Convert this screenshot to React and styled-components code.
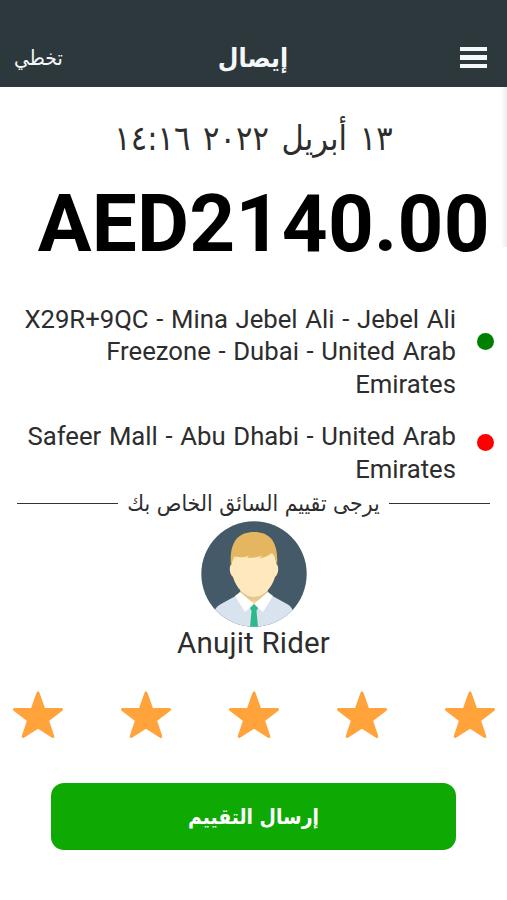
import React from "react";
import styled, { createGlobalStyle } from "styled-components";

const stops = [
	{
		color: "#008000",
		lines: ["X29R+9QC - Mina Jebel Ali - Jebel Ali", "Freezone - Dubai - United Arab", "Emirates"],
	},
	{
		color: "#ff0000",
		lines: ["Safeer Mall - Abu Dhabi - United Arab", "Emirates"],
	},
];

const Star = () => (
	<svg width="52" height="50" viewBox="0 0 52 50">
		<path
			d="M26 3 L31.8 19.4 L49.5 19.6 L35.4 30.2 L40.8 46.5 L26 37 L11.2 46.5 L16.6 30.2 L2.5 19.6 L20.2 19.4 Z"
			fill="#ffa33a"
			stroke="#ffa33a"
			strokeWidth="3"
			strokeLinejoin="round"
		/>
	</svg>
);

const Avatar = () => (
	<svg width="106" height="106" viewBox="0 0 106 106">
		<defs>
			<clipPath id="face">
				<circle cx="53" cy="53" r="52.7" />
			</clipPath>
		</defs>
		<g clipPath="url(#face)">
			<rect width="106" height="106" fill="#455a68" />
			<path d="M13 92 Q14 86 20 83 L40 72 H66 L86 83 Q92 86 93 94 V106 H13 Z" fill="#d9e2ef" />
			<path d="M39.5 62 H66.5 V73 L53 86 L39.5 73 Z" fill="#f3d79f" />
			<path d="M39.5 67 Q53 82 66.5 67 V72 Q53 88 39.5 72 Z" fill="#e4c88f" />
			<path d="M39 71 L53 83 L44 91 L34 75 Z" fill="#fff" />
			<path d="M67 71 L53 83 L62 91 L72 75 Z" fill="#fff" />
			<path d="M33 28 H73 L75.5 43 C78 45 78 53 74 56 C71 67 62 76 53 76 C44 76 35 67 32 56 C28 53 28 45 30.5 43 Z" fill="#ffe8bd" />
			<path d="M30 45 C28 21 37 11 53 11 C69 11 78 21 76 45 C75.5 40 74 35 71 32 Q66 36 58.5 37.5 L61 34.5 Q55 37 46 37 L48.5 34.5 C43 37 38 36.5 33.5 35.5 Q31 40 30 45 Z" fill="#e5b660" />
			<path d="M49 87 L53 83 L57 87 L55.5 90 L57 106 H49 L50.5 90 Z" fill="#2db98a" />
		</g>
	</svg>
);

const App = () => {
	return (
		<Wrapper>
			<GlobalStyle />
			<Header>
				<MenuButton>
					<span />
					<span />
					<span />
				</MenuButton>
				<Title>إيصال</Title>
				<Skip>تخطي</Skip>
			</Header>
			<EdgeShadow />
			<DateText>١٣ أبريل ٢٠٢٢ ١٤:١٦</DateText>
			<Amount>AED2140.00</Amount>
			<StopList>
				{stops.map((stop) => (
					<Stop key={stop.color}>
						<Dot $color={stop.color} />
						<Address>
							{stop.lines.map((line) => (
								<p key={line}>{line}</p>
							))}
						</Address>
					</Stop>
				))}
			</StopList>
			<Divider>يرجى تقييم السائق الخاص بك</Divider>
			<Driver>
				<Avatar />
				<h2>Anujit Rider</h2>
			</Driver>
			<Stars>
				{[1, 2, 3, 4, 5].map((n) => (
					<Star key={n} />
				))}
			</Stars>
			<SubmitButton>إرسال التقييم</SubmitButton>
		</Wrapper>
	);
};

const GlobalStyle = createGlobalStyle`
	* {
		box-sizing: border-box;
		margin: 0;
		padding: 0;
	}
	body {
		background: #fff;
		font-family: Roboto, "DejaVu Sans", sans-serif;
	}
`;

const Wrapper = styled.div`
	position: relative;
	display: flex;
	flex-direction: column;
	width: 507px;
	height: 900px;
	overflow: hidden;
	direction: rtl;
	background: #fff;
	color: #2d2d2d;
`;

const Header = styled.header`
	display: grid;
	grid-template-columns: 100px 1fr 100px;
	align-items: center;
	height: 87px;
	padding: 28px 20px 0 14px;
	background: #2d383d;
	color: #f4f8fa;
`;

const MenuButton = styled.button`
	display: flex;
	flex-direction: column;
	gap: 4px;
	width: 27px;
	border: 0;
	background: none;

	span {
		height: 4.5px;
		background: #f4f8fa;
	}
`;

const Title = styled.h1`
	padding-left: 5px;
	text-align: center;
	font: bold 26.5px/27px "DejaVu Sans Condensed", "DejaVu Sans", sans-serif;
`;

const Skip = styled.a`
	text-align: left;
	font: 21px/26px "DejaVu Sans Condensed", "DejaVu Sans", sans-serif;
`;

const EdgeShadow = styled.div`
	position: absolute;
	top: 87px;
	right: 0;
	width: 6px;
	height: 160px;
	background: linear-gradient(to right, #fff, #ececec);
`;

const DateText = styled.p`
	height: 48px;
	margin-top: 27px;
	text-align: center;
	font: 34px/48px "DejaVu Sans Condensed", "DejaVu Sans", sans-serif;
	word-spacing: 3px;
`;

const Amount = styled.strong`
	height: 94px;
	margin-top: 15px;
	padding-right: 17px;
	direction: ltr;
	text-align: right;
	color: #000;
	font-size: 80px;
	line-height: 94px;
	letter-spacing: 0.3px;
`;

const StopList = styled.ul`
	display: flex;
	flex-direction: column;
	gap: 20px;
	margin-top: 32px;
	padding-right: 13px;
	list-style: none;
`;

const Stop = styled.li`
	display: flex;
	gap: 21px;
`;

const Dot = styled.span`
	width: 17px;
	height: 17px;
	margin-top: 30px;
	border-radius: 50%;
	background: ${(props) => props.$color};

	li + li & {
		margin-top: 14px;
	}
`;

const Address = styled.div`
	direction: ltr;
	text-align: right;
	font-size: 25.7px;
	line-height: 32.4px;
	word-spacing: 1.3px;
	white-space: nowrap;
`;

const Divider = styled.div`
	display: flex;
	align-items: center;
	gap: 9px;
	height: 36px;
	padding: 0 17px;
	font: 22.7px/36px "DejaVu Sans Condensed", "DejaVu Sans", sans-serif;
	white-space: nowrap;

	&::before,
	&::after {
		content: "";
		flex: 1;
		height: 1px;
		background: #333;
	}
`;

const Driver = styled.div`
	display: flex;
	flex-direction: column;
	align-items: center;

	h2 {
		font-size: 29.5px;
		font-weight: 400;
		line-height: 32px;
		letter-spacing: 0.2px;
	}
`;

const Stars = styled.div`
	display: flex;
	justify-content: space-between;
	margin-top: 31px;
	padding: 0 11px 0 12px;
`;

const SubmitButton = styled.button`
	width: 405px;
	height: 67px;
	margin: 43px auto 0;
	border: 0;
	border-radius: 13px;
	background: #0fa904;
	color: #fff;
	font: bold 21px/30px "DejaVu Sans Condensed", "DejaVu Sans", sans-serif;
`;

export default App;
